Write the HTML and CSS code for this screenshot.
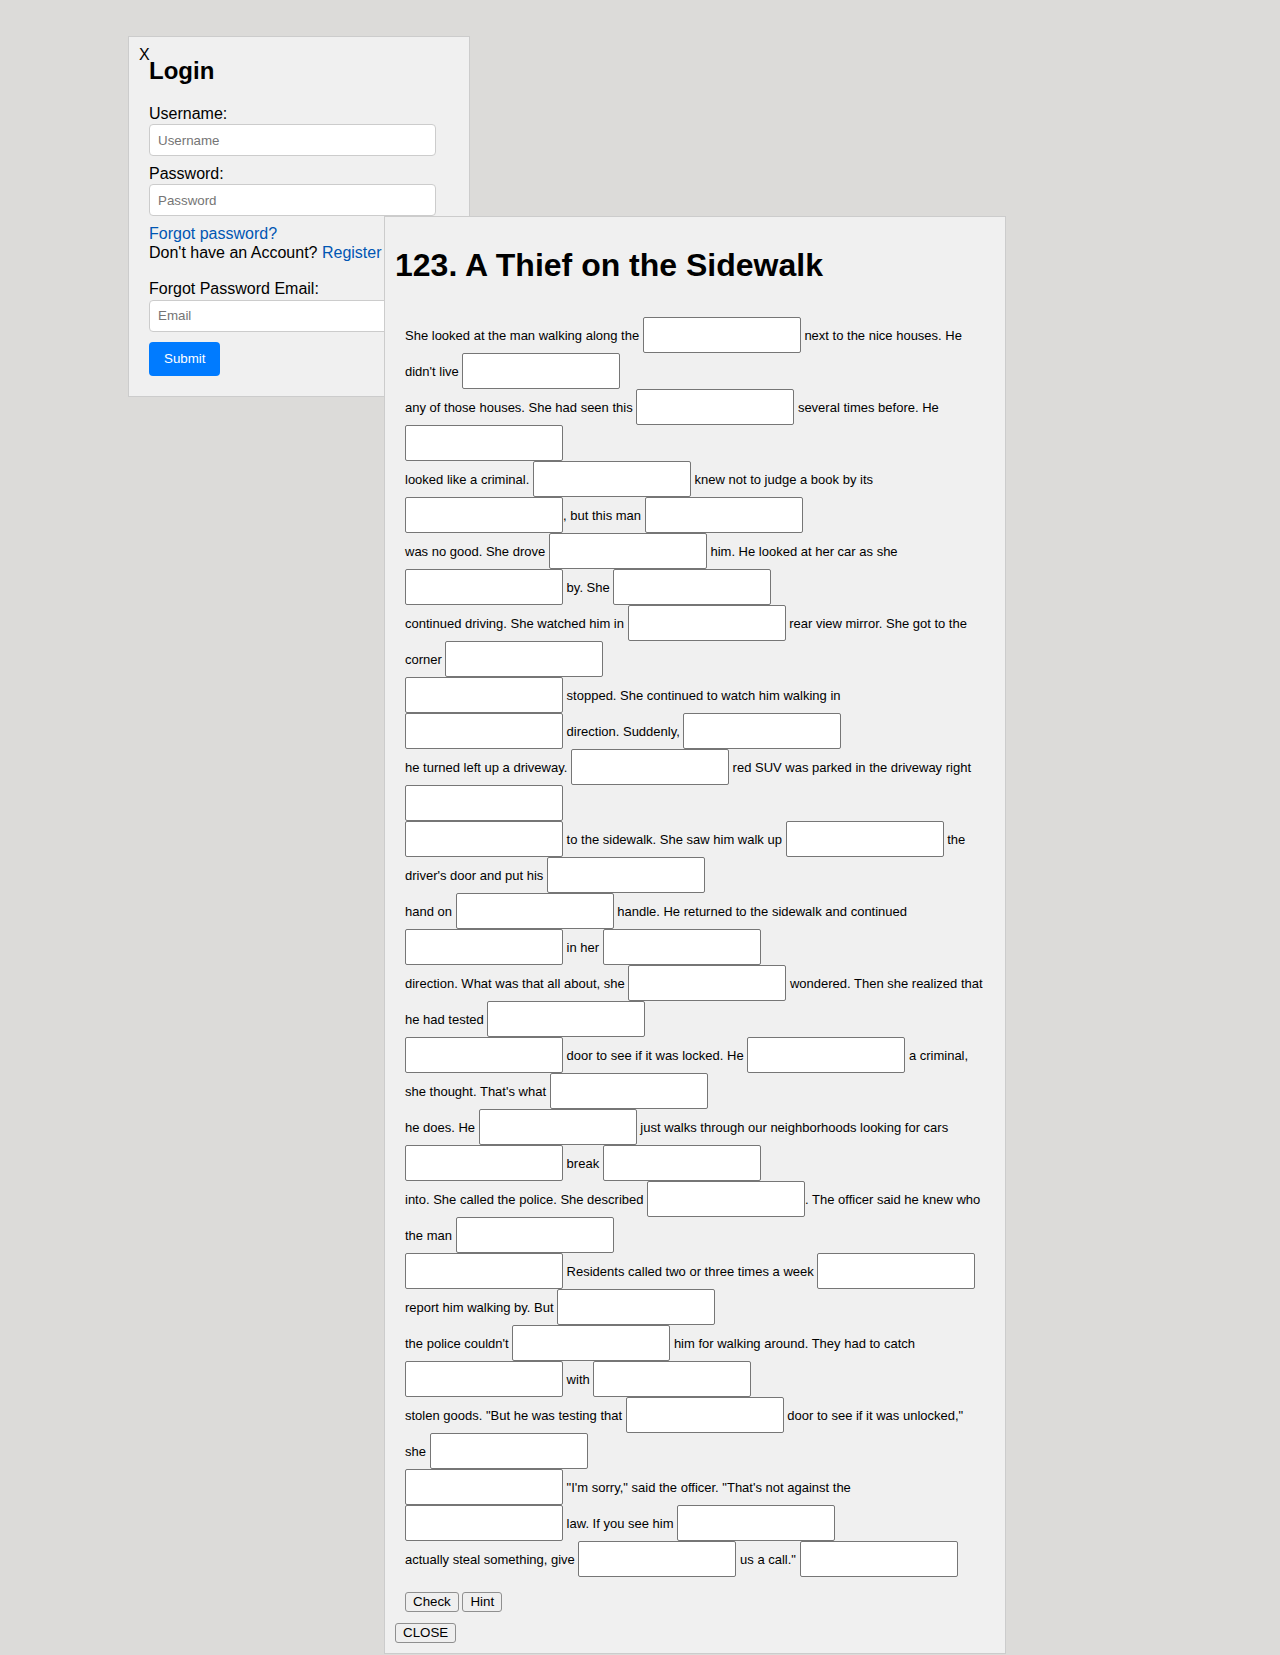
FILE: index.html
```html
<!DOCTYPE html>
<html lang="en">
<head>
<meta charset="utf-8">
<title>A Thief on the Sidewalk</title>
<link rel="stylesheet" href="styles.css">
</head>
<body>
<div class="login">
  <span class="login-close">X</span>
  <h2 class="login-title">Login</h2>
  <label class="field-label" for="u">Username:</label>
  <input class="field" id="u" type="text" placeholder="Username">
  <label class="field-label" for="p">Password:</label>
  <input class="field" id="p" type="password" placeholder="Password">
  <div class="links">
    <a class="link" href="#">Forgot password?</a><br>
    Don't have an Account? <a class="link" href="#">Register</a>
  </div>
  <label class="field-label" for="e">Forgot Password Email:</label>
  <input class="field field-last" id="e" type="email" placeholder="Email">
  <button class="submit" type="button">Submit</button>
</div>

<div class="story-panel">
  <h1 class="story-title">123. A Thief on the Sidewalk</h1>
  <div class="story">
    <div class="ln">She looked at the man walking along the <input class="blank"> next to the nice houses. He</div>
    <div class="ln">didn't live <input class="blank"></div>
    <div class="ln">any of those houses. She had seen this <input class="blank"> several times before. He</div>
    <div class="ln"><input class="blank"></div>
    <div class="ln">looked like a criminal. <input class="blank"> knew not to judge a book by its</div>
    <div class="ln"><input class="blank">, but this man <input class="blank"></div>
    <div class="ln">was no good. She drove <input class="blank"> him. He looked at her car as she</div>
    <div class="ln"><input class="blank"> by. She <input class="blank"></div>
    <div class="ln">continued driving. She watched him in <input class="blank"> rear view mirror. She got to the</div>
    <div class="ln">corner <input class="blank"></div>
    <div class="ln"><input class="blank"> stopped. She continued to watch him walking in</div>
    <div class="ln"><input class="blank"> direction. Suddenly, <input class="blank"></div>
    <div class="ln">he turned left up a driveway. <input class="blank"> red SUV was parked in the driveway right</div>
    <div class="ln"><input class="blank"></div>
    <div class="ln"><input class="blank"> to the sidewalk. She saw him walk up <input class="blank"> the</div>
    <div class="ln">driver's door and put his <input class="blank"></div>
    <div class="ln">hand on <input class="blank"> handle. He returned to the sidewalk and continued</div>
    <div class="ln"><input class="blank"> in her <input class="blank"></div>
    <div class="ln">direction. What was that all about, she <input class="blank"> wondered. Then she realized that</div>
    <div class="ln">he had tested <input class="blank"></div>
    <div class="ln"><input class="blank"> door to see if it was locked. He <input class="blank"> a criminal,</div>
    <div class="ln">she thought. That's what <input class="blank"></div>
    <div class="ln">he does. He <input class="blank"> just walks through our neighborhoods looking for cars</div>
    <div class="ln"><input class="blank"> break <input class="blank"></div>
    <div class="ln">into. She called the police. She described <input class="blank">. The officer said he knew who</div>
    <div class="ln">the man <input class="blank"></div>
    <div class="ln"><input class="blank"> Residents called two or three times a week <input class="blank"></div>
    <div class="ln">report him walking by. But <input class="blank"></div>
    <div class="ln">the police couldn't <input class="blank"> him for walking around. They had to catch</div>
    <div class="ln"><input class="blank"> with <input class="blank"></div>
    <div class="ln">stolen goods. "But he was testing that <input class="blank"> door to see if it was unlocked,"</div>
    <div class="ln">she <input class="blank"></div>
    <div class="ln"><input class="blank"> "I'm sorry," said the officer. "That's not against the</div>
    <div class="ln"><input class="blank"> law. If you see him <input class="blank"></div>
    <div class="ln">actually steal something, give <input class="blank"> us a call." <input class="blank"></div>
    <div class="actions">
      <button class="btn" type="button">Check</button>
      <button class="btn" type="button">Hint</button>
    </div>
  </div>
  <button class="btn btn-close" type="button">CLOSE</button>
</div>
</body>
</html>
```

FILE: styles.css
```css
html, body {
  margin: 0;
  padding: 0;
}

body {
  background: #dcdbd9;
  font-family: "Liberation Sans", Arial, sans-serif;
  color: #000;
  min-height: 1655px;
  position: relative;
}

/* ---------- Login box ---------- */
.login {
  position: relative;
  width: 300px;
  margin: 36px 0 0 128px;
  padding: 20px;
  background: #f0f0f0;
  border: 1px solid #cccccc;
  font-size: 16px;
}

.login-close {
  position: absolute;
  top: 9px;
  left: 10px;
  font-size: 16px;
  line-height: 18px;
}

.login-title {
  margin: 0 0 20px;
  font-size: 24px;
  font-weight: bold;
  line-height: 27.6px;
}

.field-label {
  display: block;
  font-size: 16px;
  line-height: 18.4px;
}

.field {
  display: block;
  box-sizing: border-box;
  width: 287px;
  height: 32px;
  margin: 1px 0 9px;
  padding: 0 8px;
  border: 1px solid #cccccc;
  border-radius: 4px;
  background: #fff;
  font: 13.333px "Liberation Sans", Arial, sans-serif;
  color: #000;
}

.field::placeholder {
  color: #757575;
}

.field-last {
  margin-bottom: 10px;
}

.links {
  margin-top: 2px;
  margin-bottom: 18px;
  line-height: 18.4px;
}

.link {
  color: #0056b3;
  text-decoration: none;
}

.submit {
  display: block;
  box-sizing: border-box;
  height: 34px;
  padding: 0 15px;
  border: none;
  border-radius: 4px;
  background: #007bff;
  color: #fff;
  font: 13.333px "Liberation Sans", Arial, sans-serif;
}

/* ---------- Story panel ---------- */
.story-panel {
  position: absolute;
  left: 384px;
  top: 216px;
  width: 600px;
  padding: 10px;
  background: #f0f0f0;
  border: 1px solid #cccccc;
}

.story-title {
  margin: 20px 0 23px;
  font-size: 32px;
  font-weight: bold;
  line-height: 36.8px;
}

.story {
  padding: 10px;
  font-size: 13px;
  white-space: nowrap;
}

.ln {
  display: block;
}

.blank {
  box-sizing: border-box;
  width: 158px;
  height: 36px;
  margin: 0;
  padding: 1px 2px;
  border: 1px solid #767676;
  border-radius: 2px;
  background: #fff;
  font: 13.333px "Liberation Sans", Arial, sans-serif;
  vertical-align: baseline;
}

.actions {
  margin-top: 15px;
  font-size: 13.333px;
}

.btn {
  box-sizing: border-box;
  height: 20px;
  padding: 0 7px;
  margin: 0;
  border: 1px solid #8f8f8f;
  border-radius: 3px;
  background: #efefef;
  color: #000;
  font: 13.333px "Liberation Sans", Arial, sans-serif;
  line-height: 18px;
}

.btn-close {
  display: block;
  margin-top: 1px;
}
```
